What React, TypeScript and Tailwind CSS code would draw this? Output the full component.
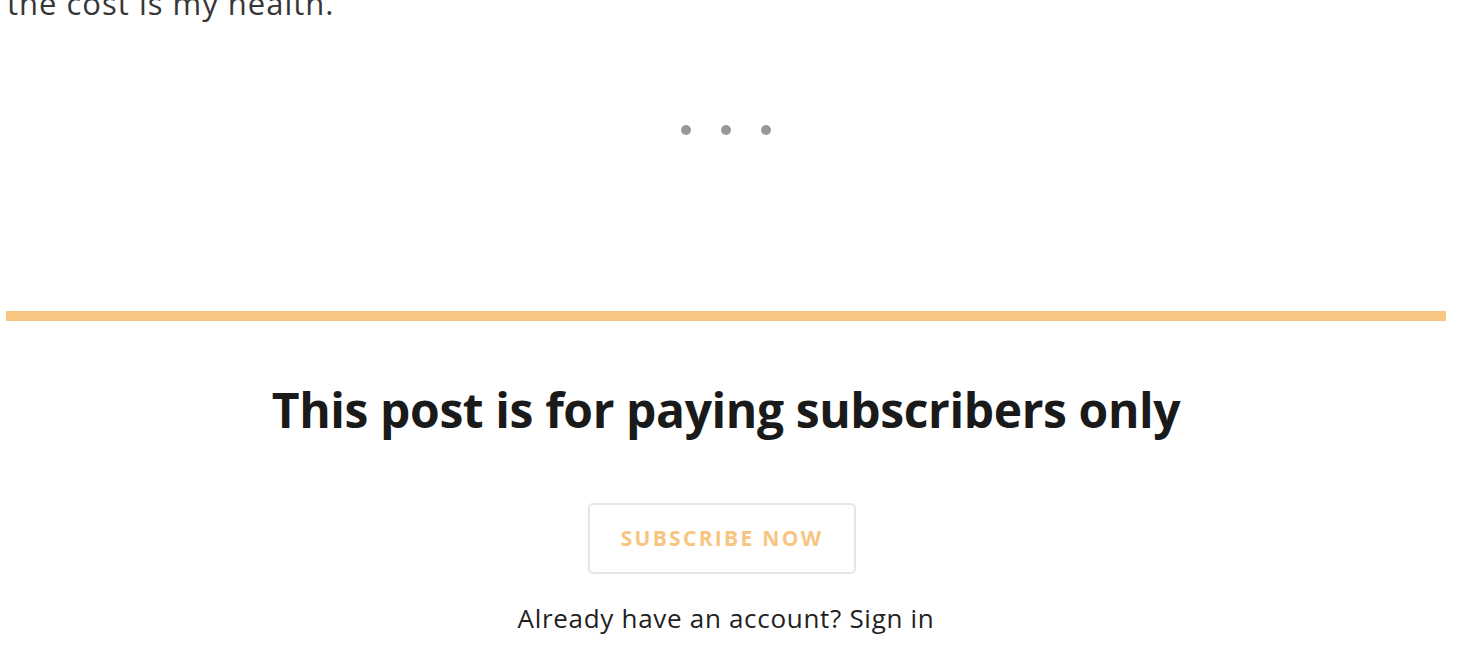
import React from "react";

export default function App() {
  return (
    <div className="w-[1480px] h-[672px] overflow-hidden bg-white" style={{ fontFamily: "'Open Sans', 'Noto Sans', sans-serif" }}>
      <div className="ml-[6px] w-[1440px] flex flex-col">
        <p className="mt-[-16px] pl-[1px] text-[31px] leading-[38px] tracking-[1px] text-[#363636]">the cost is my health.</p>
        <div className="mt-[103px] h-[10px] flex justify-center gap-[30px]">
          <span className="w-[10px] h-[10px] rounded-full bg-[#999999]" />
          <span className="w-[10px] h-[10px] rounded-full bg-[#999999]" />
          <span className="w-[10px] h-[10px] rounded-full bg-[#999999]" />
        </div>
        <div className="mt-[176px] h-[10px] bg-[#f7c680]" />
        <h2 className="mt-[60px] text-center text-[48px] leading-[58px] tracking-[-0.4px] font-bold text-[#1a1a1a]">
          This post is for paying subscribers only
        </h2>
        <div className="mt-[64px] flex justify-center pr-[8px]">
          <button className="w-[268px] h-[71px] border-2 border-[#e6e6e6] rounded-[5px] bg-white text-[#f7c580] font-bold text-[21px] tracking-[2.3px] uppercase">
            Subscribe now
          </button>
        </div>
        <p className="mt-[29px] text-center text-[26px] leading-[30px] tracking-[0.7px] text-[#222222]">
          Already have an account? Sign in
        </p>
      </div>
    </div>
  );
}
